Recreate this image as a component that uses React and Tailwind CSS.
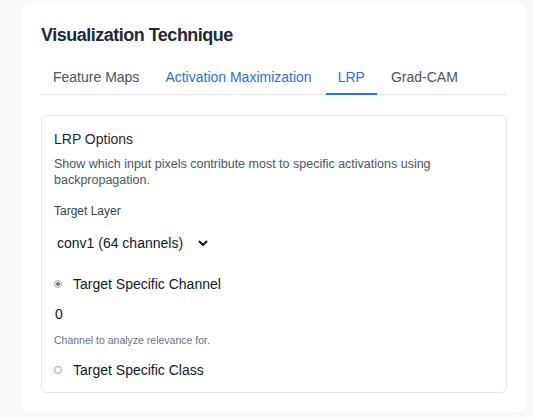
export default function App() {
  const font = { fontFamily: '"Liberation Sans", Arial, sans-serif' };
  return (
    <div className="min-h-[417px] bg-[#f8f9fb] pt-[3px]" style={font}>
      <div className="ml-[21px] w-[506px] rounded-[10px] bg-white p-5 shadow-[0_1px_2px_rgba(0,0,0,0.03)]">
        <h2 className="mb-[11px] text-[18px] font-bold leading-6 tracking-[-0.5px] text-[#1f2937]">Visualization Technique</h2>
        <div className="flex gap-[2px] border-b border-[#e5e7eb] text-[14px] leading-5">
          <div className="px-3 pb-[7px] pt-[9px] text-[#4b5563]">Feature Maps</div>
          <div className="px-3 pb-[7px] pt-[9px] text-[#2f6bea]">Activation Maximization</div>
          <div className="-mb-px border-b-2 border-[#2f6bea] px-3 pb-[5px] pt-[9px] text-[#2f6bea]">LRP</div>
          <div className="px-3 pb-[7px] pt-[9px] text-[#4b5563]">Grad-CAM</div>
        </div>
        <div className="mt-5 rounded-md border border-[#e5e7eb] p-3">
          <div className="text-[14px] leading-[22px] text-[#1f2937]">LRP Options</div>
          <p className="mt-[6px] text-[12.5px] leading-4 text-[#4b5563]">
            Show which input pixels contribute most to specific activations using backpropagation.
          </p>
          <div className="mt-[15px] text-[12px] leading-4 text-[#374151]">Target Layer</div>
          <div className="mt-[10px] flex h-7 items-center pl-[3px] text-[14px] text-[#111827]">
            <span>conv1 (64 channels)</span>
            <svg className="ml-[15px]" width="10" height="8" viewBox="0 0 10 8">
              <path d="M1.5 2.5 L5 6 L8.5 2.5" fill="none" stroke="#111827" strokeWidth="2" strokeLinecap="round" strokeLinejoin="round" />
            </svg>
          </div>
          <div className="mt-[17px] flex h-5 items-center text-[14px] text-[#111827]">
            <span className="flex h-[8px] w-[8px] items-center justify-center rounded-full border border-[#9ca3af]">
              <span className="h-[4px] w-[4px] rounded-full bg-[#6b7280]" />
            </span>
            <span className="ml-[11px]">Target Specific Channel</span>
          </div>
          <div className="mt-[10px] pl-px text-[14px] leading-5 text-[#111827]">0</div>
          <div className="mt-2 text-[10.5px] leading-4 text-[#6b7280]">Channel to analyze relevance for.</div>
          <div className="mt-3 flex h-5 items-center text-[14px] text-[#111827]">
            <span className="h-[8px] w-[8px] rounded-full border border-[#9ca3af]" />
            <span className="ml-[11px]">Target Specific Class</span>
          </div>
        </div>
      </div>
    </div>
  );
}
